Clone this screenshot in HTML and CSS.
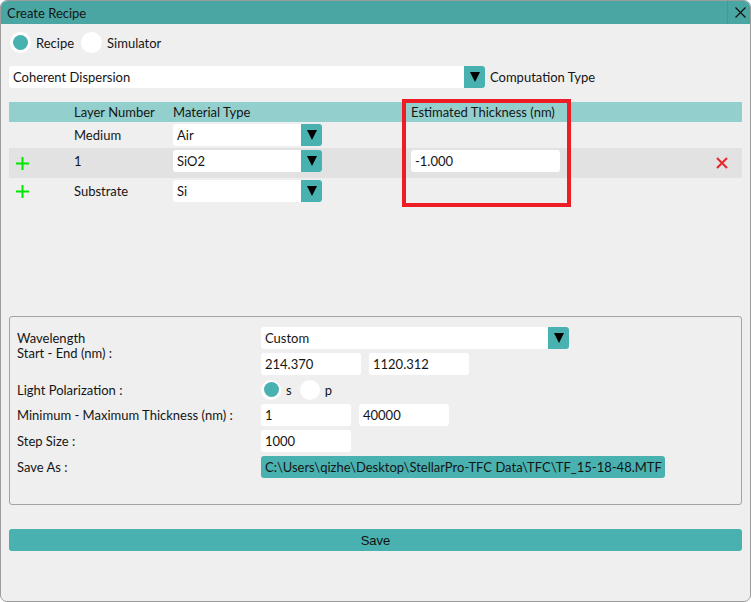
FILE: index.html
```html
<!DOCTYPE html>
<html lang="en">
<head>
    <meta charset="UTF-8">
    <title>Create Recipe</title>
    <link rel="stylesheet" href="styles.css">
</head>
<body>
    <div class="window">
        <div class="titlebar">
            <span class="title">Create Recipe</span>
            <div class="close-btn">
                <svg width="11" height="11" viewBox="0 0 11 11"><path d="M0.5 0.5 L10.5 10.5 M10.5 0.5 L0.5 10.5" stroke="#111" stroke-width="1.2" fill="none"/></svg>
            </div>
        </div>

        <div class="content">
            <div class="mode-row">
                <label class="radio"><span class="radio-dot checked"></span>Recipe</label>
                <label class="radio"><span class="radio-dot"></span>Simulator</label>
            </div>

            <div class="computation-row">
                <div class="combo combo-wide">
                    <span class="combo-text">Coherent Dispersion</span>
                    <span class="combo-btn"><span class="arrow"></span></span>
                </div>
                <span class="computation-label">Computation Type</span>
            </div>

            <div class="layers">
                <div class="layer-row layer-head">
                    <span></span>
                    <span>Layer Number</span>
                    <span>Material Type</span>
                    <span>Estimated Thickness (nm)</span>
                    <span></span>
                </div>
                <div class="layer-row row-medium">
                    <span></span>
                    <span class="cell-text">Medium</span>
                    <div class="combo combo-material">
                        <span class="combo-text">Air</span>
                        <span class="combo-btn"><span class="arrow"></span></span>
                    </div>
                    <span></span>
                    <span></span>
                </div>
                <div class="layer-row row-layer">
                    <span class="plus">
                        <svg width="13" height="13" viewBox="0 0 13 13"><path d="M6.5 0 V13 M0 6.5 H13" stroke="#00e600" stroke-width="2" fill="none"/></svg>
                    </span>
                    <span class="cell-text">1</span>
                    <div class="combo combo-material">
                        <span class="combo-text">SiO2</span>
                        <span class="combo-btn"><span class="arrow"></span></span>
                    </div>
                    <div class="field field-thickness">-1.000</div>
                    <span class="remove">
                        <svg width="12" height="12" viewBox="0 0 12 12"><path d="M1 1 L11 11 M11 1 L1 11" stroke="#e8262b" stroke-width="2" fill="none"/></svg>
                    </span>
                </div>
                <div class="layer-row row-substrate">
                    <span class="plus">
                        <svg width="13" height="13" viewBox="0 0 13 13"><path d="M6.5 0 V13 M0 6.5 H13" stroke="#00e600" stroke-width="2" fill="none"/></svg>
                    </span>
                    <span class="cell-text">Substrate</span>
                    <div class="combo combo-material">
                        <span class="combo-text">Si</span>
                        <span class="combo-btn"><span class="arrow"></span></span>
                    </div>
                    <span></span>
                    <span></span>
                </div>
            </div>

            <div class="settings">
                <div class="setting-row row-wavelength">
                    <div class="setting-label">Wavelength<br>Start - End (nm) :</div>
                    <div class="setting-fields stacked">
                        <div class="combo combo-custom">
                            <span class="combo-text">Custom</span>
                            <span class="combo-btn"><span class="arrow"></span></span>
                        </div>
                        <div class="pair">
                            <div class="field field-100">214.370</div>
                            <div class="field field-100">1120.312</div>
                        </div>
                    </div>
                </div>
                <div class="setting-row row-polar">
                    <div class="setting-label">Light Polarization :</div>
                    <div class="setting-fields">
                        <label class="radio radio-small"><span class="radio-dot checked"></span>s</label>
                        <label class="radio radio-small"><span class="radio-dot"></span>p</label>
                    </div>
                </div>
                <div class="setting-row">
                    <div class="setting-label">Minimum - Maximum Thickness (nm) :</div>
                    <div class="setting-fields pair">
                        <div class="field field-90">1</div>
                        <div class="field field-90">40000</div>
                    </div>
                </div>
                <div class="setting-row">
                    <div class="setting-label">Step Size :</div>
                    <div class="setting-fields">
                        <div class="field field-90">1000</div>
                    </div>
                </div>
                <div class="setting-row">
                    <div class="setting-label">Save As :</div>
                    <div class="setting-fields">
                        <div class="save-path">C:\Users\qizhe\Desktop\StellarPro-TFC Data\TFC\TF_15-18-48.MTF</div>
                    </div>
                </div>
            </div>

            <button class="save-btn">Save</button>
        </div>

        <div class="highlight"></div>
    </div>
</body>
</html>
```

FILE: styles.css
```css
* {
    box-sizing: border-box;
}
body {
    margin: 0;
    background: #ffffff;
    font-family: Lato, "Open Sans", sans-serif;
    font-size: 13px;
    color: #151515;
}
.window {
    position: relative;
    width: 751px;
    height: 602px;
    border: 1px solid #9c9c9c;
    border-radius: 7px;
    background: #efefef;
    overflow: hidden;
    display: flex;
    flex-direction: column;
}
.titlebar {
    height: 23px;
    background: #4aa6a3;
    display: flex;
    align-items: center;
    justify-content: space-between;
    padding-left: 6px;
}
.title {
    font-size: 13px;
}
.close-btn {
    width: 22px;
    height: 23px;
    border-left: 1px solid #5b8d8b;
    display: flex;
    align-items: center;
    justify-content: center;
    padding-left: 3px;
    margin-right: 1px;
}
.content {
    padding: 0 8px;
    display: flex;
    flex-direction: column;
}

/* radios */
.mode-row {
    display: flex;
    align-items: center;
    height: 21px;
    margin-top: 8px;
    padding-left: 1px;
}
.radio {
    display: flex;
    align-items: center;
    margin-right: 7px;
}
.radio-dot {
    width: 21px;
    height: 21px;
    border-radius: 50%;
    background: #ffffff;
    display: flex;
    align-items: center;
    justify-content: center;
    margin-right: 5px;
}
.radio-dot.checked::after {
    content: "";
    width: 15px;
    height: 15px;
    border-radius: 50%;
    background: #49b1af;
}
.radio-small .radio-dot {
    width: 20px;
    height: 20px;
}
.radio-small {
    margin-right: 8px;
}

/* combo boxes */
.combo {
    display: flex;
    height: 22px;
    background: #ffffff;
    border-radius: 3px;
}
.combo-text {
    flex: 1;
    display: flex;
    align-items: center;
    padding-left: 4px;
}
.combo-btn {
    width: 21px;
    background: #49b1af;
    border-radius: 0 3px 3px 0;
    display: flex;
    align-items: center;
    justify-content: center;
}
.arrow {
    width: 0;
    height: 0;
    border-left: 5px solid transparent;
    border-right: 5px solid transparent;
    border-top: 10px solid #000000;
}
.computation-row {
    display: flex;
    align-items: center;
    margin-top: 13px;
}
.combo-wide {
    width: 476px;
}
.computation-label {
    margin-left: 5px;
}

/* layer table */
.layers {
    margin-top: 14px;
    height: 214px;
}
.layer-row {
    display: grid;
    grid-template-columns: 65px 99px 238px 1fr 26px;
    align-items: center;
}
.layer-head {
    height: 20px;
    background: #93cfcd;
}
.row-medium {
    height: 26px;
    align-items: start;
    padding-top: 2px;
}
.row-medium .cell-text {
    line-height: 22px;
}
.row-layer {
    height: 30px;
    background: #e2e2e2;
    align-items: start;
    padding-top: 2px;
}
.row-layer .cell-text,
.row-layer .plus,
.row-layer .remove {
    height: 22px;
    display: flex;
    align-items: center;
}
.row-layer .plus,
.row-layer .remove {
    padding-top: 4px;
}
.row-substrate {
    height: 26px;
    align-items: start;
    padding-top: 2px;
}
.row-substrate .cell-text,
.row-substrate .plus {
    height: 22px;
    display: flex;
    align-items: center;
}
.plus {
    padding-left: 7px;
}
.combo-material {
    width: 149px;
}
.field {
    height: 22px;
    background: #ffffff;
    border-radius: 3px;
    display: flex;
    align-items: center;
    padding-left: 4px;
}
.field-thickness {
    width: 149px;
}

/* settings group */
.settings {
    border: 1px solid #a3a3a3;
    border-radius: 3px;
    height: 189px;
    padding: 10px 7px 0;
    display: flex;
    flex-direction: column;
    gap: 4px;
}
.setting-row {
    display: flex;
    align-items: center;
}
.setting-label {
    width: 244px;
}
.setting-fields {
    display: flex;
    align-items: center;
}
.row-wavelength {
    align-items: flex-start;
}
.row-wavelength .setting-label {
    line-height: 15px;
    padding-top: 4px;
}
.stacked {
    flex-direction: column;
    align-items: flex-start;
    gap: 4px;
}
.combo-custom {
    width: 308px;
}
.pair {
    display: flex;
    gap: 8px;
}
.field-100 {
    width: 100px;
}
.field-90 {
    width: 90px;
}
.row-polar {
    height: 21px;
}
.save-path {
    width: 404px;
    height: 22px;
    background: #49b1af;
    border-radius: 3px;
    display: flex;
    align-items: center;
    padding-left: 4px;
}

.save-btn {
    margin-top: 24px;
    height: 22px;
    border: none;
    border-radius: 3px;
    background: #49b1af;
    color: #111111;
    font-family: "Liberation Sans Narrow", "Liberation Sans", sans-serif;
    font-size: 13px;
    padding: 0;
}

/* red annotation box over the thickness column */
.highlight {
    position: absolute;
    left: 401px;
    top: 98px;
    width: 169px;
    height: 108px;
    border: 4px solid #ee1c24;
}
```
